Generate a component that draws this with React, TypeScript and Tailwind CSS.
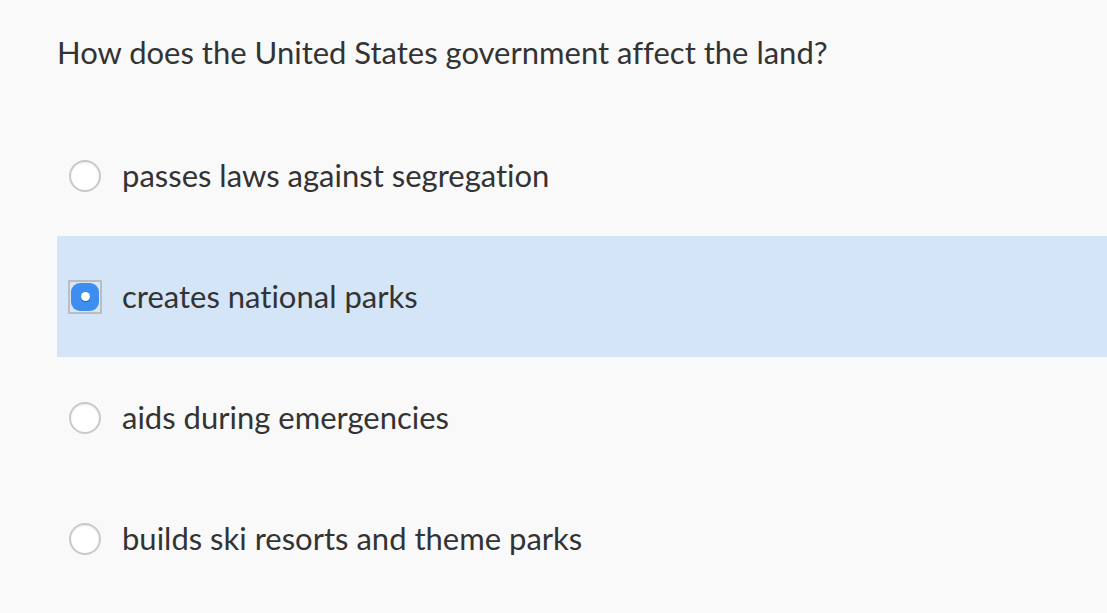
import React from "react";

const options = [
  "passes laws against segregation",
  "creates national parks",
  "aids during emergencies",
  "builds ski resorts and theme parks",
];

function Radio({ checked }: { checked: boolean }) {
  if (checked) {
    return (
      <div className="-mx-[1px] flex h-[34px] w-[34px] items-center justify-center border-2 border-[#b9bec6] bg-[#dbe6f2]">
        <div className="flex h-[28px] w-[28px] items-center justify-center rounded-[9px] bg-[#3d8ef0]">
          <div className="h-[9px] w-[9px] rounded-full bg-white shadow-[0_1px_1px_rgba(0,0,0,0.35)]" />
        </div>
      </div>
    );
  }
  return (
    <div className="h-[32px] w-[32px] rounded-full border-2 border-[#c9c9c9] bg-white shadow-[inset_0_1px_2px_rgba(0,0,0,0.08)]" />
  );
}

export default function App() {
  const selected = 1;
  return (
    <div
      className="h-[613px] w-[1107px] overflow-hidden bg-[#f9f9f9] pl-[57px] text-[#333] [font-variant-ligatures:none]"
      style={{ fontFamily: "Lato, 'Open Sans', sans-serif" }}
    >
      <div className="pt-[30px] text-[31px] leading-[44px]">
        How does the United States government affect the land?
      </div>
      <div className="mt-[41px] flex flex-col">
        {options.map((o, i) => (
          <div
            key={o}
            className={
              "flex h-[121px] items-center gap-[21px] pl-[12px] text-[31px] " +
              (i === selected ? "bg-[#d4e5f7]" : "")
            }
          >
            <Radio checked={i === selected} />
            <span>{o}</span>
          </div>
        ))}
      </div>
    </div>
  );
}
